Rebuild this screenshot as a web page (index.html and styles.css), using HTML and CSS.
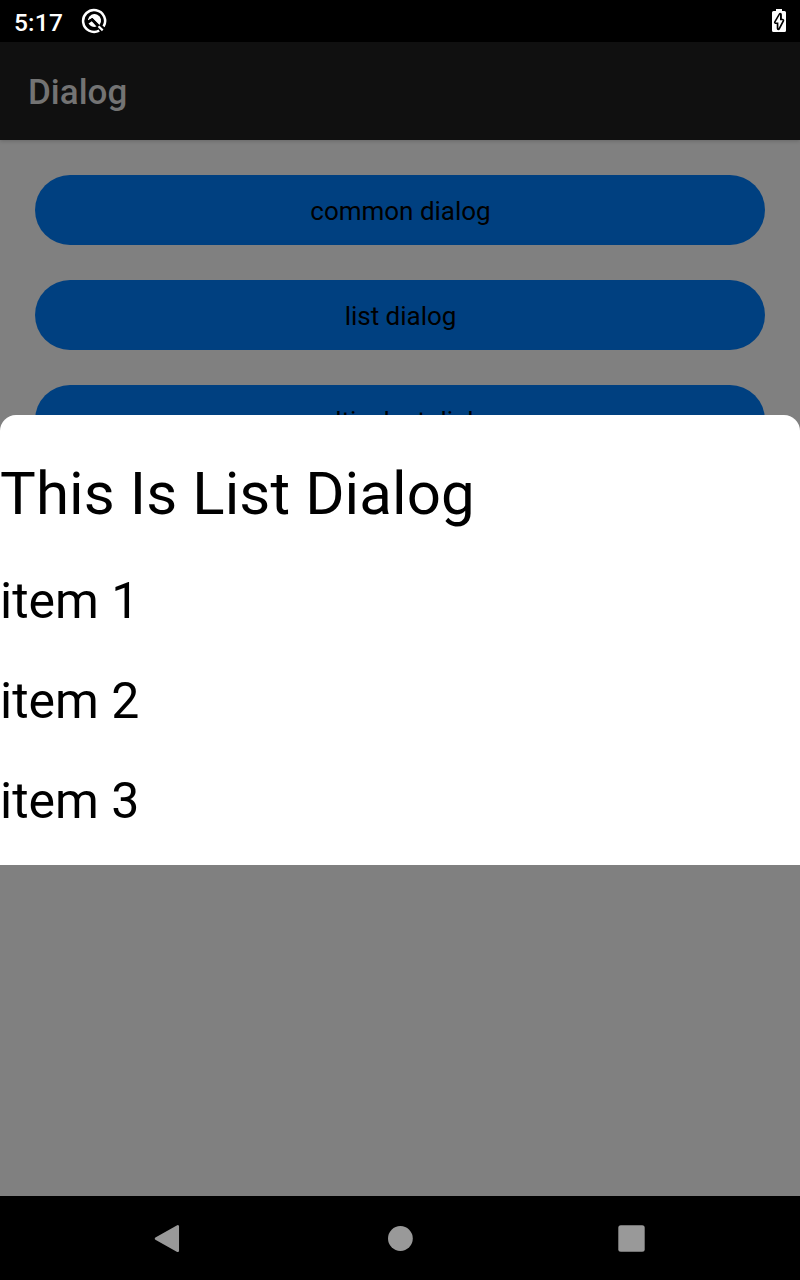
FILE: index.html
```html
<!DOCTYPE html>
<html lang="en">
<head>
<meta charset="utf-8">
<title>Dialog</title>
<link rel="stylesheet" href="styles.css">
</head>
<body>
<div class="screen">
  <header class="status">
    <span class="clock">5:17</span>
    <svg class="debug-icon" width="26" height="26" viewBox="0 0 26 26">
      <path d="M18.200 22.700A11 11 0 1 1 22.600 18.500" fill="none" stroke="#fff" stroke-width="2.500"/>
      <path d="M7 11.500A6.600 6.600 0 1 1 18.500 17L11.500 10L7 12.500z" fill="#fff"/>
      <path d="M7.500 15.500L10.800 13.200L15.500 18.500A6.500 6.500 0 0 1 7.500 15.500z" fill="#fff"/>
      <path d="M6.500 14.200L11 11.200L20.500 21.500" fill="none" stroke="#000" stroke-width="2"/>
      <path d="M17.500 18.200l4.200 4.200" stroke="#fff" stroke-width="2.200"/>
    </svg>
    <svg class="battery" width="14" height="24" viewBox="0 0 14 24">
      <path d="M4 0h6v2h2.500Q14 2 14 3.500v18q0 1.500-1.500 1.500h-11Q0 23 0 21.500v-18Q0 2 1.500 2H4z" fill="#fff"/>
      <path d="M8.200 5.500L3.600 13.300H6.400V19.500L10.600 11.400H8.200z" fill="#000" stroke="#000" stroke-width="3.400" stroke-linejoin="round"/>
      <path d="M8 5.500L3.400 13.500H6.400V19.500L10.800 11.200H8z" fill="#fff"/>
    </svg>
  </header>
  <div class="appbar">Dialog</div>
  <main class="content">
    <div class="button">common dialog</div>
    <div class="button">list dialog</div>
    <div class="button">multiselect dialog</div>
    <section class="dialog">
      <div class="heading">This Is List Dialog</div>
      <div class="item">item 1</div>
      <div class="item">item 2</div>
      <div class="item">item 3</div>
    </section>
  </main>
  <nav class="navbar">
    <svg width="28" height="30" viewBox="0 0 28 30"><path d="M24.800 2.400v24.400L3 14.600z" fill="#999" stroke="#999" stroke-width="2.500" stroke-linejoin="round"/></svg>
    <svg width="26" height="26" viewBox="0 0 26 26"><circle cx="13.400" cy="12.500" r="12.400" fill="#999"/></svg>
    <svg width="27" height="27" viewBox="0 0 27 27"><rect x=".3" y=".3" width="26.400" height="26.400" rx="2.500" fill="#999"/></svg>
  </nav>
</div>
</body>
</html>
```
FILE: styles.css
```css
body {
  margin: 0;
  font-family: Roboto, sans-serif;
  color: #000;
}

.screen {
  display: flex;
  flex-direction: column;
  width: 800px;
  height: 1280px;
  overflow: hidden;
  background: #808080;
}

.status {
  display: flex;
  align-items: center;
  box-sizing: border-box;
  height: 42px;
  padding: 0 14px;
  background: #000;
  color: #fff;
}

.clock {
  padding-top: 3px;
  font-size: 24.5px;
  font-weight: 500;
  letter-spacing: 0.2px;
  line-height: 30px;
}

.debug-icon {
  margin-left: 18px;
}

.battery {
  margin-left: auto;
}

.appbar {
  position: relative;
  box-sizing: border-box;
  height: 98px;
  padding: 3px 28px 0;
  background: #101010;
  box-shadow: 0 1px 4px rgba(0, 0, 0, 0.2);
  color: #737373;
  font-size: 35px;
  font-weight: 500;
  line-height: 96px;
}

.content {
  position: relative;
  display: flex;
  flex: 1;
  flex-direction: column;
  gap: 35px;
  padding: 35px;
}

.button {
  height: 70px;
  border-radius: 35px;
  background: #004080;
  font-size: 26px;
  letter-spacing: -0.02px;
  line-height: 72px;
  text-align: center;
  text-indent: 1px;
}

/* Sheet covering the lower part of the page */
.dialog {
  position: absolute;
  top: 275px;
  left: 0;
  box-sizing: border-box;
  width: 100%;
  height: 450px;
  padding-top: 21px;
  border-radius: 16px 16px 0 0;
  background: #fff;
}

.heading {
  height: 115px;
  font-size: 60px;
  letter-spacing: 0.1px;
  line-height: 116px;
}

.item {
  height: 100px;
  font-size: 50px;
  line-height: 100px;
}

.navbar {
  display: flex;
  align-items: center;
  justify-content: space-between;
  box-sizing: border-box;
  height: 84px;
  padding: 1px 155px 0 153px;
  background: #000;
}
```
